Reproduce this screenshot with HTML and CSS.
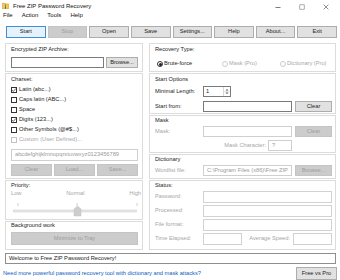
FILE: index.html
```html
<!DOCTYPE html>
<html lang="en">
<head>
<meta charset="utf-8">
<title>Free ZIP Password Recovery</title>
<link rel="stylesheet" href="styles.css">
</head>
<body>
<div class="window">
  <header class="titlebar">
    <svg class="appicon" width="7" height="7" viewBox="0 0 7 7">
      <path d="M0.3 1.2h2.4l0.6 0.7h3.4v4.8h-6.4z" fill="#f0c850" stroke="#c4922c" stroke-width="0.5"/>
      <rect x="3" y="1.9" width="1" height="4.8" fill="#7a5a2a"/>
      <rect x="3" y="2.6" width="1" height="0.5" fill="#e9e2c8"/>
      <rect x="3" y="3.8" width="1" height="0.5" fill="#e9e2c8"/>
    </svg>
    <span class="title">Free ZIP Password Recovery</span>
    <div class="winctrls">
      <span class="wc"><svg width="8" height="8" viewBox="0 0 8 8"><path d="M1.5 4.5h5" stroke="#444" stroke-width="0.7"/></svg></span>
      <span class="wc"><svg width="8" height="8" viewBox="0 0 8 8"><rect x="1.8" y="1.8" width="4.4" height="4.4" fill="none" stroke="#777" stroke-width="0.6"/></svg></span>
      <span class="wc"><svg width="8" height="8" viewBox="0 0 8 8"><path d="M1.6 1.6l4.8 4.8M6.4 1.6l-4.8 4.8" stroke="#444" stroke-width="0.6"/></svg></span>
    </div>
  </header>

  <nav class="menubar">
    <span>File</span><span>Action</span><span>Tools</span><span>Help</span>
  </nav>

  <div class="toolbar">
    <div class="btn primary">Start</div>
    <div class="btn disabled">Stop</div>
    <div class="btn">Open</div>
    <div class="btn">Save</div>
    <div class="btn">Settings...</div>
    <div class="btn">Help</div>
    <div class="btn">About...</div>
    <div class="btn">Exit</div>
  </div>

  <main class="main">
    <section class="col left">
      <div class="grp g-archive">
        <span class="grp-title">Encrypted ZIP Archive:</span>
        <div class="row r-archive">
          <div class="tb grow"></div>
          <div class="btn b-browse">Browse...</div>
        </div>
      </div>

      <div class="grp g-charset">
        <span class="grp-title">Charset:</span>
        <div class="checks">
          <div class="chk on"><span class="box"><svg width="6" height="6" viewBox="0 0 6 6"><path d="M1 3.1l1.3 1.3L5 1.4" fill="none" stroke="#222" stroke-width="0.7"/></svg></span>Latin (abc...)</div>
          <div class="chk"><span class="box"></span>Caps latin (ABC...)</div>
          <div class="chk"><span class="box"></span>Space</div>
          <div class="chk on"><span class="box"><svg width="6" height="6" viewBox="0 0 6 6"><path d="M1 3.1l1.3 1.3L5 1.4" fill="none" stroke="#222" stroke-width="0.7"/></svg></span>Digits (123...)</div>
          <div class="chk"><span class="box"></span>Other Symbols (@#$...)</div>
          <div class="chk off"><span class="box"></span>Custom (User Defined)...</div>
        </div>
        <div class="tb dis custom">abcdefghijklmnopqrstuvwxyz0123456789</div>
        <div class="row r-cbtns">
          <div class="btn disabled">Clear</div>
          <div class="btn disabled">Load...</div>
          <div class="btn disabled">Save...</div>
        </div>
      </div>

      <div class="grp g-priority">
        <span class="grp-title">Priority:</span>
        <div class="scale"><span>Low</span><span>Normal</span><span>High</span></div>
        <svg class="slider" width="128" height="16" viewBox="0 0 128 16">
          <path d="M7 2v3M66 2v3M126 2v3" stroke="#c4c4c4" stroke-width="0.8"/>
          <rect x="2.5" y="9" width="123" height="2" fill="#e6e6e6" stroke="#d4d4d4" stroke-width="0.6"/>
          <path d="M63 8L66.5 5L70 8V15H63Z" fill="#cdcdcd" stroke="#c2c2c2" stroke-width="0.5"/>
        </svg>
      </div>

      <div class="grp g-bg">
        <span class="grp-title">Background work</span>
        <div class="btn disabled b-tray">Minimize to Tray</div>
      </div>
    </section>

    <section class="col right">
      <div class="grp g-type">
        <span class="grp-title">Recovery Type:</span>
        <div class="radios">
          <div class="rad on"><span class="dot"></span>Brute-force</div>
          <div class="rad off"><span class="dot"></span>Mask (Pro)</div>
          <div class="rad off"><span class="dot"></span>Dictionary (Pro)</div>
        </div>
      </div>

      <div class="grp g-start">
        <span class="grp-title">Start Options</span>
        <div class="row r1">
          <span class="lbl">Minimal Length:</span>
          <div class="tb spin"><span class="val">1</span><span class="arrows"><svg width="6" height="9" viewBox="0 0 6 9"><path d="M1.5 3.5L3 2L4.5 3.5Z M1.5 5.5L3 7L4.5 5.5Z" fill="#555"/><path d="M0 4.5h6" stroke="#ccc" stroke-width="0.5"/></svg></span></div>
        </div>
        <div class="row r2">
          <span class="lbl">Start from:</span>
          <div class="tb grow"></div>
          <div class="btn b-side">Clear</div>
        </div>
      </div>

      <div class="grp g-mask">
        <span class="grp-title">Mask</span>
        <div class="row r1">
          <span class="lbl dim">Mask:</span>
          <div class="tb dis grow"></div>
          <div class="btn disabled b-side">Clear</div>
        </div>
        <div class="row r-mchar">
          <span class="lbl2 dim">Mask Character:</span>
          <div class="tb dis mchar">?</div>
        </div>
      </div>

      <div class="grp g-dict">
        <span class="grp-title">Dictionary</span>
        <div class="row r-dict">
          <span class="lbl dim">Wordlist file:</span>
          <div class="tb dis grow path">C:\Program Files (x86)\Free ZIP</div>
          <div class="btn disabled b-side">Browse...</div>
        </div>
      </div>

      <div class="grp g-status">
        <span class="grp-title">Status:</span>
        <div class="row srow">
          <span class="lbl dim">Password:</span>
          <div class="tb sbox grow"></div>
        </div>
        <div class="row srow">
          <span class="lbl dim">Processed:</span>
          <div class="tb sbox grow"></div>
        </div>
        <div class="row srow">
          <span class="lbl dim">File format:</span>
          <div class="tb sbox grow"></div>
        </div>
        <div class="row srow">
          <span class="lbl dim">Time Elapsed:</span>
          <div class="tb sbox half"></div>
          <span class="lbl3 dim">Average Speed:</span>
          <div class="tb sbox half"></div>
        </div>
      </div>
    </section>
  </main>

  <div class="statusline">Welcome to Free ZIP Password Recovery!</div>

  <footer class="footer">
    <span class="link">Need more powerful password recovery tool with dictionary and mask attacks?</span>
    <div class="btn b-pro">Free vs Pro</div>
  </footer>
</div>
</body>
</html>
```

FILE: styles.css
```css
* { box-sizing: border-box; margin: 0; padding: 0; }
html, body { width: 340px; height: 280px; }
body {
  overflow: hidden;
  background: #ffffff;
  font-family: "Liberation Sans", Arial, sans-serif;
  font-size: 5.7px;
  line-height: 1;
  color: #1c1c1c;
}
.window { display: flex; flex-direction: column; width: 340px; height: 280px; }

/* title bar */
.titlebar { height: 13px; display: flex; align-items: center; padding-left: 2px; font-size: 6px; color: #111; }
.appicon { flex: none; margin-right: 4px; }
.title { flex: 1; }
.winctrls { display: flex; align-self: stretch; padding-right: 2px; }
.wc { width: 24px; display: flex; align-items: center; justify-content: center; padding-top: 3px; }

/* menu */
.menubar { height: 11px; display: flex; align-items: center; gap: 9px; padding-left: 3px; font-size: 6px; color: #111; }

/* toolbar */
.toolbar { display: flex; gap: 2px; padding: 7px 3px 0 6px; height: 31px; }
.toolbar .btn { flex: 1; height: 12px; }

/* buttons */
.btn {
  display: flex; align-items: center; justify-content: center;
  background: #e1e1e1; border: 1px solid #adadad; color: #1c1c1c;
  white-space: nowrap; flex: none;
}
.btn.primary { background: #e5f1fb; border-color: #3c8fd8; }
.btn.disabled { background: #cccccc; border-color: #c4c4c4; color: #9d9d9d; }

/* text boxes */
.tb { height: 11px; border: 1px solid #7a7a7a; background: #fff; display: flex; align-items: center; padding-left: 3px; overflow: hidden; white-space: nowrap; }
.tb.dis { border-color: #cfcfcf; color: #9a9a9a; }
.grow { flex: 1; min-width: 0; }

/* layout */
.main { display: flex; gap: 6px; padding: 0 4px 0 5px; height: 208px; flex: none; }
.col { display: flex; flex-direction: column; }
.left { width: 138px; }
.right { width: 187px; }

/* group boxes */
.grp { border: 1px solid #dcdcdc; flex: none; display: flex; flex-direction: column; padding: 1px 3px 0 5px; margin-top: 1px; }
.grp-title { display: block; height: 8px; line-height: 8px; color: #1c1c1c; white-space: nowrap; }

.g-archive { height: 29px; }
.g-charset { height: 106px; }
.g-priority { height: 40px; padding-top: 0; }
.g-bg { height: 29px; padding-top: 0; }
.g-bg .grp-title { margin-top: -1px; }

.g-type { height: 29px; }
.g-start { height: 41px; }
.g-mask { height: 38px; padding-top: 0; margin-top: 1px; }
.g-dict { height: 25px; padding-top: 0; }
.g-status { height: 70px; padding-top: 0; }

.row { display: flex; align-items: center; height: 11px; flex: none; }

/* archive */
.r-archive { margin-top: 4px; gap: 2px; padding-right: 1px; }
.b-browse { width: 32px; height: 11px; }

/* charset */
.checks { margin-top: 2px; display: flex; flex-direction: column; }
.chk { height: 10px; display: flex; align-items: center; gap: 2px; }
.chk .box { width: 6px; height: 6px; border: 0.8px solid #333; background: #fff; display: flex; align-items: center; justify-content: center; flex: none; }
.chk .box svg { flex: none; }
.chk.off { color: #a8a8a8; }
.chk.off .box { border-color: #c2c2c2; }
.custom { margin-top: 4px; height: 12px; margin-right: 1px; }
.r-cbtns { margin-top: 3px; height: 12px; gap: 2px; padding-right: 1px; }
.r-cbtns .btn { flex: 1; height: 12px; }

/* priority */
.scale { margin-top: 1px; height: 8px; display: flex; align-items: center; justify-content: space-between; color: #a8a8a8; margin-right: -2px; flex: none; }
.slider { margin-top: 3px; display: block; flex: none; }

/* background */
.b-tray { margin-top: 3px; height: 13px; margin-right: 1px; }

/* recovery type */
.radios { margin-top: 7px; height: 8px; display: grid; grid-template-columns: 65px 58px auto; padding-left: 2px; align-items: center; }
.rad { display: flex; align-items: center; gap: 1px; white-space: nowrap; }
.rad .dot { width: 6px; height: 6px; border-radius: 50%; border: 0.8px solid #333; background: #fff; flex: none; display: flex; align-items: center; justify-content: center; }
.rad.on .dot::after { content: ""; width: 3px; height: 3px; border-radius: 50%; background: #222; }
.rad.off { color: #a8a8a8; }
.rad.off .dot { border-color: #cccccc; }

/* right rows */
.lbl { width: 48px; flex: none; white-space: nowrap; }
.dim { color: #a6a6a6; }
.g-start .r1 { margin-top: 3px; }
.g-start .r2 { margin-top: 4px; }
.b-side { width: 37px; height: 11px; margin-left: 3px; }
.spin { width: 28px; padding-left: 2px; justify-content: space-between; padding-right: 0; }
.spin .arrows { width: 7px; height: 9px; display: flex; align-items: center; justify-content: center; border-left: 0.5px solid #d8d8d8; }

.g-mask .r1 { margin-top: 2px; }
.r-mchar { margin-top: 3px; justify-content: flex-end; padding-right: 40px; gap: 2px; }
.mchar { width: 24px; }

.r-dict { margin-top: 2px; }
.path { color: #6a6a6a; }

.srow { height: 12px; margin-top: 2px; }
.sbox { height: 12px; border-color: #d2d2d2; }
.half { width: 39px; flex: none; }
.lbl3 { flex: 1; text-align: right; padding-right: 3px; white-space: nowrap; }

/* bottom */
.statusline { margin: 3px 4px 0 5px; height: 11px; border: 1px solid #8e8e8e; background: #fff; display: flex; align-items: center; padding-left: 3px; flex: none; color: #1c1c1c; }
.footer { display: flex; align-items: center; justify-content: space-between; margin-top: 3px; height: 13px; padding: 0 3px 0 3px; flex: none; }
.link { color: #0a5cc2; }
.b-pro { width: 41px; height: 13px; }
```
